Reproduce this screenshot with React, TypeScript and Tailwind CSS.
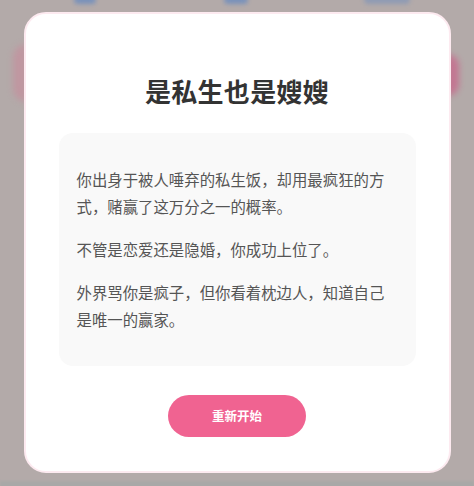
import React from "react";

export default function App() {
  return (
    <div
      className="relative w-[474px] h-[486px] overflow-hidden bg-[#b3aaa9]"
      style={{ fontFamily: '"Noto Sans CJK SC", "Noto Sans", sans-serif' }}
    >
      {/* blurred background content behind the overlay */}
      <div className="absolute left-[74px] top-[-4px] w-[22px] h-[8px] rounded-full bg-[#6b8cbf] blur-[2px] opacity-80" />
      <div className="absolute left-[224px] top-[-4px] w-[24px] h-[8px] rounded-full bg-[#6b8cbf] blur-[2px] opacity-80" />
      <div className="absolute left-[364px] top-[-4px] w-[46px] h-[8px] rounded-full bg-[#7891bb] blur-[2px] opacity-60" />
      <div className="absolute left-[13px] top-[44px] w-[14px] h-[58px] rounded-l-full bg-[#c98a9b] blur-[3px] opacity-60" />
      <div className="absolute left-[447px] top-[54px] w-[12px] h-[42px] rounded-r-full bg-[#c9648a] blur-[3px] opacity-75" />
      <div className="absolute left-0 top-[481px] w-full h-[10px] bg-[#a8a8a7] blur-[1px]" />

      <div className="relative flex justify-center pt-[12px]">
        <div className="w-[427px] h-[461px] rounded-[22px] border-2 border-[#fdeaf0] bg-white flex flex-col items-center px-[33px]">
          <h1 className="mt-[59px] text-[26px] leading-[36px] font-bold text-[#333333] tracking-[0.3px]">
            是私生也是嫂嫂
          </h1>
          <div className="mt-[24px] w-[357px] rounded-[14px] bg-[#f9f9f9] px-[18px] py-[33px] text-[15.4px] leading-[27px] text-[#555555]">
            <p>你出身于被人唾弃的私生饭，却用最疯狂的方式，赌赢了这万分之一的概率。</p>
            <p className="mt-[16px]">不管是恋爱还是隐婚，你成功上位了。</p>
            <p className="mt-[16px]">外界骂你是疯子，但你看着枕边人，知道自己是唯一的赢家。</p>
          </div>
          <button className="mt-[29px] w-[138px] h-[42px] rounded-full bg-[#f06391] text-white text-[12.5px] font-semibold">
            重新开始
          </button>
        </div>
      </div>
    </div>
  );
}
